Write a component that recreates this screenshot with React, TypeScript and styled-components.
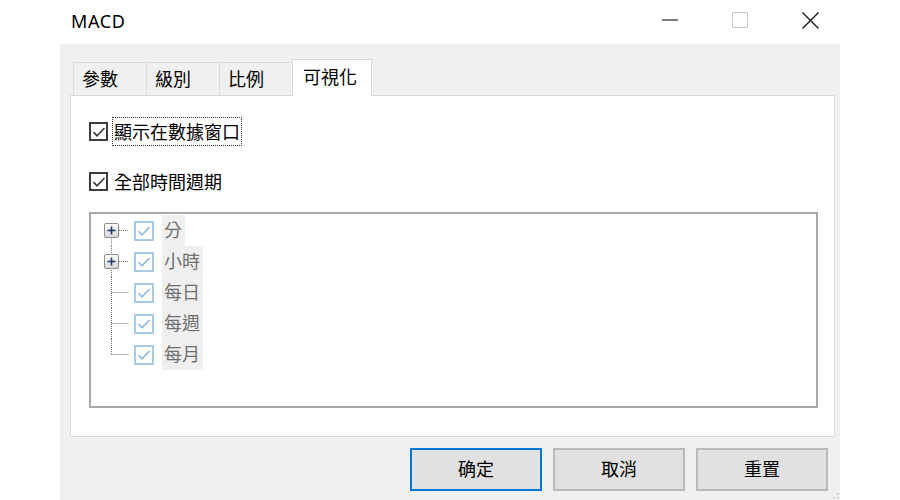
import React from "react";
import styled, { createGlobalStyle } from "styled-components";

const GlobalStyle = createGlobalStyle`
  html, body { margin: 0; padding: 0; background: #ffffff; }
  body {
    font-family: "Noto Sans CJK TC", "Noto Sans", sans-serif;
    -webkit-font-smoothing: antialiased;
  }
  * { box-sizing: border-box; }
`;

const Window = styled.div`
  width: 900px;
  height: 500px;
  display: flex;
  flex-direction: column;
  background: #ffffff;
  overflow: hidden;
`;

const TitleBar = styled.div`
  height: 44px;
  flex: none;
  display: flex;
  align-items: center;
  padding-left: 71px;
  padding-right: 55px;
`;

const Title = styled.div`
  font-family: "Noto Sans", "Open Sans", sans-serif;
  font-size: 18px;
  letter-spacing: 0.6px;
  color: #000000;
  line-height: 1;
  margin-top: -2px;
`;

const Controls = styled.div`
  margin-left: auto;
  display: flex;
  height: 44px;
`;

const ControlButton = styled.div`
  width: 70px;
  height: 40px;
  display: flex;
  align-items: center;
  justify-content: center;
`;

const Body = styled.div`
  position: relative;
  margin-left: 60px;
  width: 780px;
  flex: 1;
  background: #f0f0f0;
  padding: 15px 5px 0 10px;
  display: flex;
  flex-direction: column;
`;

const TabBar = styled.div`
  height: 36px;
  display: flex;
  align-items: flex-end;
  padding-left: 3px;
`;

const Tab = styled.div<{ $active?: boolean }>`
  position: relative;
  z-index: ${(p) => (p.$active ? 2 : 1)};
  width: ${(p) => (p.$active ? 80 : 74)}px;
  height: ${(p) => (p.$active ? 37 : 33)}px;
  margin-bottom: ${(p) => (p.$active ? -1 : 0)}px;
  margin-left: -1px;
  &:first-child { margin-left: 0; }
  border: 1px solid #d9d9d9;
  border-bottom: none;
  background: ${(p) => (p.$active ? "#ffffff" : "#f0f0f0")};
  padding-left: ${(p) => (p.$active ? 10 : 8)}px;
  padding-top: ${(p) => (p.$active ? 4 : 3)}px;
  font-size: 18px;
  line-height: 24px;
  color: #000000;
  white-space: nowrap;
`;

const Panel = styled.div`
  height: 342px;
  border: 1px solid #d9d9d9;
  background: #ffffff;
  padding: 21px 0 0 18px;
  display: flex;
  flex-direction: column;
`;

const CheckRow = styled.div<{ $gap?: number }>`
  height: 29px;
  display: flex;
  align-items: center;
  margin-top: ${(p) => p.$gap ?? 0}px;
`;

const Box = styled.span`
  width: 19px;
  height: 19px;
  border: 2px solid #3c3c3c;
  background: #ffffff;
  display: flex;
  align-items: center;
  justify-content: center;
  flex: none;
`;

const CheckLabel = styled.span<{ $focus?: boolean }>`
  margin-left: 4px;
  height: 29px;
  padding: 0 2px 2px 2px;
  display: flex;
  align-items: center;
  font-size: 18px;
  line-height: 1;
  color: #000000;
  outline: ${(p) => (p.$focus ? "1px dotted #333333" : "none")};
  outline-offset: -1px;
`;

const TreeBox = styled.div`
  margin-top: 16px;
  width: 729px;
  height: 196px;
  border: 2px solid #a8a8a8;
  background: #ffffff;
  padding-top: 1px;
  display: flex;
  flex-direction: column;
`;

const TreeRow = styled.div`
  height: 31px;
  display: flex;
  align-items: center;
`;

const TreeCheck = styled.span`
  width: 20px;
  height: 20px;
  border: 2px solid #a9cbea;
  background: #ffffff;
  display: flex;
  align-items: center;
  justify-content: center;
  flex: none;
`;

const TreeLabel = styled.span`
  margin-left: 8px;
  height: 31px;
  padding: 0 3px 3px 2px;
  display: flex;
  align-items: center;
  background: #efefef;
  font-size: 18px;
  line-height: 1;
  color: #6f6f6f;
`;

const ButtonRow = styled.div`
  margin-top: 11px;
  display: flex;
  justify-content: flex-end;
  gap: 11px;
  padding-right: 7px;
`;

const Button = styled.div<{ $primary?: boolean }>`
  width: 132px;
  height: 43px;
  background: #e1e1e1;
  border: 2px solid ${(p) => (p.$primary ? "#0078d7" : "#b9b9b9")};
  display: flex;
  align-items: center;
  justify-content: center;
  padding-bottom: 3px;
  font-size: 18px;
  line-height: 1;
  color: #000000;
`;

const Grip = styled.svg`
  position: absolute;
  right: 1px;
  bottom: 1px;
`;

const CheckMark = ({ color, w }: { color: string; w: number }) => (
  <svg width="14" height="12" viewBox="0 0 14 12">
    <path d="M1.5 6.2 L5 9.8 L12.5 2" fill="none" stroke={color} strokeWidth={w} />
  </svg>
);

const Connector = ({
  first,
  last,
  expandable,
}: {
  first?: boolean;
  last?: boolean;
  expandable?: boolean;
}) => {
  const x = 20.5;
  const cy = 15.5;
  const vTop = first ? cy : 0;
  const vBottom = last ? cy : 31;
  return (
    <svg width="43" height="31" viewBox="0 0 43 31" style={{ flex: "none" }}>
      <line x1={x} y1={vTop} x2={x} y2={vBottom} stroke="#6e6e6e" strokeWidth="1" strokeDasharray="1 1" />
      <line x1={expandable ? 28 : x} y1={cy} x2={38} y2={cy} stroke="#6e6e6e" strokeWidth="1" strokeDasharray="1 1" />
      {expandable && (
        <g>
          <defs>
            <linearGradient id="pb" x1="0" y1="0" x2="0" y2="1">
              <stop offset="0" stopColor="#ffffff" />
              <stop offset="1" stopColor="#d6d6d6" />
            </linearGradient>
          </defs>
          <rect x="13.5" y="8.5" width="14" height="14" rx="1.5" fill="url(#pb)" stroke="#8e8f8f" />
          <line x1="16.5" y1="15.5" x2="24.5" y2="15.5" stroke="#1f3a6e" strokeWidth="1.6" />
          <line x1="20.5" y1="11.5" x2="20.5" y2="19.5" stroke="#1f3a6e" strokeWidth="1.6" />
        </g>
      )}
    </svg>
  );
};

const treeItems = [
  { label: "分", expandable: true },
  { label: "小時", expandable: true },
  { label: "每日" },
  { label: "每週" },
  { label: "每月" },
];

export default function App() {
  return (
    <>
      <GlobalStyle />
      <Window>
        <TitleBar>
          <Title>MACD</Title>
          <Controls>
            <ControlButton>
              <svg width="16" height="2" viewBox="0 0 16 2">
                <line x1="0" y1="1" x2="16" y2="1" stroke="#222" strokeWidth="1.2" />
              </svg>
            </ControlButton>
            <ControlButton>
              <svg width="16" height="16" viewBox="0 0 16 16">
                <rect x="0.5" y="0.5" width="15" height="15" fill="none" stroke="#c8c8c8" strokeWidth="1" />
              </svg>
            </ControlButton>
            <ControlButton>
              <svg width="17" height="17" viewBox="0 0 17 17">
                <path d="M0.5 0.5 L16.5 16.5 M16.5 0.5 L0.5 16.5" stroke="#111" strokeWidth="1.3" fill="none" />
              </svg>
            </ControlButton>
          </Controls>
        </TitleBar>
        <Body>
          <TabBar>
            <Tab>參數</Tab>
            <Tab>級別</Tab>
            <Tab>比例</Tab>
            <Tab $active>可視化</Tab>
          </TabBar>
          <Panel>
            <CheckRow>
              <Box>
                <CheckMark color="#3c3c3c" w={1.7} />
              </Box>
              <CheckLabel $focus>顯示在數據窗口</CheckLabel>
            </CheckRow>
            <CheckRow $gap={21}>
              <Box>
                <CheckMark color="#3c3c3c" w={1.7} />
              </Box>
              <CheckLabel>全部時間週期</CheckLabel>
            </CheckRow>
            <TreeBox>
              {treeItems.map((it, i) => (
                <TreeRow key={it.label}>
                  <Connector
                    first={i === 0}
                    last={i === treeItems.length - 1}
                    expandable={it.expandable}
                  />
                  <TreeCheck>
                    <CheckMark color="#8db7de" w={1.6} />
                  </TreeCheck>
                  <TreeLabel>{it.label}</TreeLabel>
                </TreeRow>
              ))}
            </TreeBox>
          </Panel>
          <ButtonRow>
            <Button $primary>确定</Button>
            <Button>取消</Button>
            <Button>重置</Button>
          </ButtonRow>
          <Grip width="7" height="7" viewBox="0 0 7 7">
            <rect x="5" y="1" width="1.5" height="1.5" fill="#bdbdbd" />
            <rect x="5" y="5" width="1.5" height="1.5" fill="#bdbdbd" />
            <rect x="1" y="5" width="1.5" height="1.5" fill="#bdbdbd" />
          </Grip>
        </Body>
      </Window>
    </>
  );
}
